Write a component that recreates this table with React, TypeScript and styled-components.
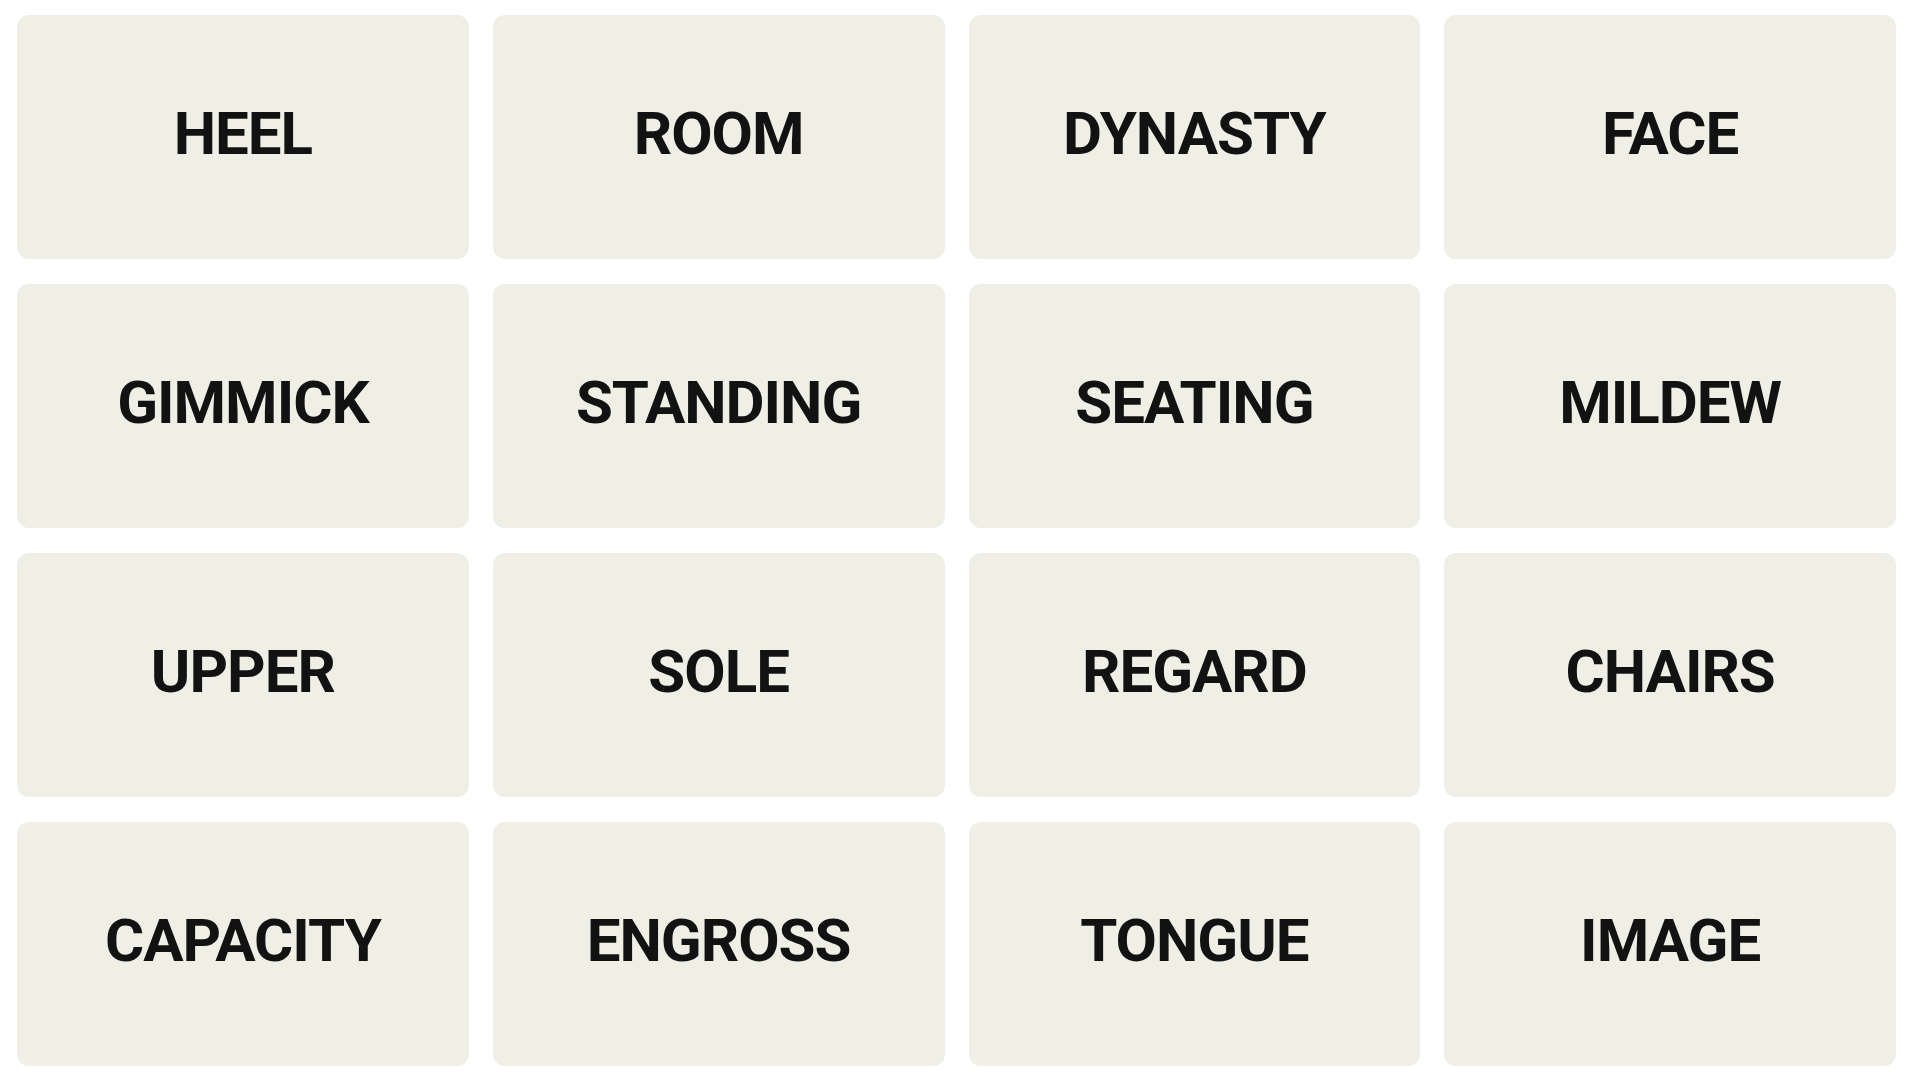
import styled, { createGlobalStyle } from "styled-components";

const WORDS = [
  "HEEL", "ROOM", "DYNASTY", "FACE",
  "GIMMICK", "STANDING", "SEATING", "MILDEW",
  "UPPER", "SOLE", "REGARD", "CHAIRS",
  "CAPACITY", "ENGROSS", "TONGUE", "IMAGE",
];

const GlobalStyle = createGlobalStyle`
  html, body {
    margin: 0;
    padding: 0;
    background: #ffffff;
  }
`;

const App = () => {
  return (
    <>
      <GlobalStyle />
      <Board>
        {WORDS.map((word) => (
          <Tile key={word}>{word}</Tile>
        ))}
      </Board>
    </>
  );
};

const Board = styled.div`
  display: grid;
  grid-template-columns: repeat(4, 1fr);
  grid-template-rows: repeat(4, 244px);
  column-gap: 24px;
  row-gap: 25px;
  width: 1879px;
  padding: 15px 0 0 17px;
`;

const Tile = styled.div`
  display: flex;
  align-items: center;
  justify-content: center;
  padding-bottom: 8px;
  box-sizing: border-box;
  background: #efefe6;
  border-radius: 12px;
  color: #121212;
  font-family: Roboto, "Liberation Sans", sans-serif;
  font-weight: 700;
  font-size: 60px;
  letter-spacing: -1px;
  text-transform: uppercase;
  user-select: none;
`;

export default App;
